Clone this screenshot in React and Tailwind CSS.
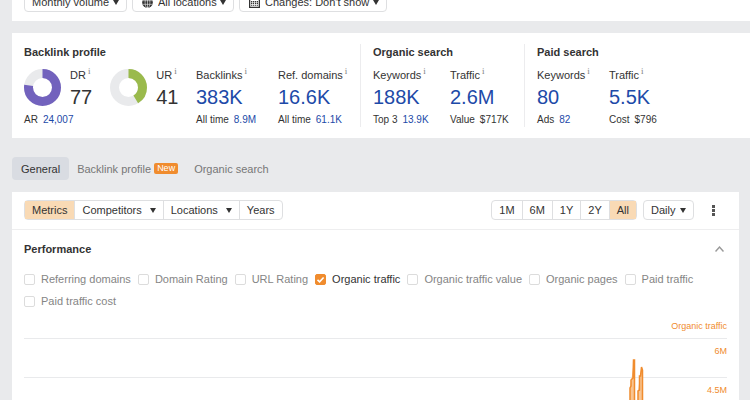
import { useState } from 'react';
import clsx from 'clsx';

const SERIES = [
  'Referring domains',
  'Domain Rating',
  'URL Rating',
  'Organic traffic',
  'Organic traffic value',
  'Organic pages',
  'Paid traffic',
  'Paid traffic cost',
];

const RANGES = ['1M', '6M', '1Y', '2Y', 'All'];

function Caret({ className }) {
  return (
    <svg viewBox="0 0 6 5" className={clsx('h-[5px] w-[6px] shrink-0 fill-[#333]', className)} aria-hidden="true">
      <path d="M0 0h6L3 5z" />
    </svg>
  );
}

function Globe() {
  return (
    <svg viewBox="0 0 12 12" className="h-[11px] w-[11px]" aria-hidden="true">
      <circle cx="6" cy="6" r="5.8" fill="#333" />
      <g fill="none" stroke="#fff" strokeWidth="0.6">
        <ellipse cx="6" cy="6" rx="2.6" ry="5.6" />
        <path d="M6 0v12M0.5 4h11M0.5 8h11" />
      </g>
    </svg>
  );
}

function Calendar() {
  return (
    <svg viewBox="0 0 12 12" className="h-[11px] w-[11px]" aria-hidden="true">
      <path d="M0.7 0.7h10.6v10.6H0.7z" fill="#fff" stroke="#333" strokeWidth="1.4" />
      <path d="M0 0h12v3.2H0z" fill="#333" />
      <path d="M2.2 5h7.6M2.2 7h7.6M2.2 9h7.6" stroke="#333" strokeWidth="1.3" strokeDasharray="1.4 0.7" />
    </svg>
  );
}

function Select({ label, icon, options, small }) {
  return (
    <div className="relative flex h-5 items-center rounded-sm border border-[#dedfe1] bg-white">
      {icon && <span className="pointer-events-none absolute left-[9px]">{icon}</span>}
      <select
        aria-label={label}
        className={clsx(
          'h-full appearance-none bg-transparent outline-none',
          icon ? 'pl-[25px]' : 'pl-[7px]',
          small ? 'pr-[17px]' : 'pr-4'
        )}
      >
        {options.map((o) => (
          <option key={o}>{o}</option>
        ))}
      </select>
      <Caret className="pointer-events-none absolute right-[7px]" />
    </div>
  );
}

// share is the filled part, clockwise from the top
function Donut({ share, color }) {
  const length = 2 * Math.PI * 14;
  return (
    <svg viewBox="0 0 37 37" className="h-[37px] w-[37px] shrink-0" aria-hidden="true">
      <g fill="none" strokeWidth="9" transform="rotate(-90 18.5 18.5)">
        <circle cx="18.5" cy="18.5" r="14" stroke="#e9eaec" />
        <circle
          cx="18.5"
          cy="18.5"
          r="14"
          stroke={color}
          strokeDasharray={`${(length * share) / 100} ${length}`}
        />
      </g>
    </svg>
  );
}

function Label({ children }) {
  return (
    <div className="flex h-4 whitespace-nowrap leading-4">
      {children}
      <span className="ml-[2px] font-serif text-[9px] leading-[9px] text-[#888]">i</span>
    </div>
  );
}

function Rating({ name, value, color }) {
  return (
    <div className="flex gap-[9px]">
      <div className="pt-[2px]">
        <Donut share={value} color={color} />
      </div>
      <div>
        <Label>{name}</Label>
        <div className="mt-[2px] text-[20px] leading-6">{value}</div>
      </div>
    </div>
  );
}

function Metric({ label, value, note, noteValue, link = true, className }) {
  return (
    <div className={className}>
      <Label>{label}</Label>
      <a href="#" className="mt-[2px] block text-[20px] leading-6 text-[#1d4aa8]">{value}</a>
      <div className="mt-1 flex gap-[5px] whitespace-nowrap text-[10px] leading-[14px]">
        <span>{note}</span>
        {link ? <a href="#" className="text-[#1d4aa8]">{noteValue}</a> : <span>{noteValue}</span>}
      </div>
    </div>
  );
}

function Section({ title, className, children }) {
  return (
    <section className={className}>
      <h2 className="text-[11px] font-bold leading-4">{title}</h2>
      <div className="mt-[7px] flex">{children}</div>
    </section>
  );
}

function SeriesCheckbox({ name, checked, onChange }) {
  return (
    <label className={clsx('flex h-4 items-center gap-[6px]', checked ? 'text-[#333]' : 'text-[#858585]')}>
      <span className="relative flex">
        <input
          type="checkbox"
          checked={checked}
          onChange={onChange}
          className="h-[11px] w-[11px] appearance-none rounded-xs border border-[#dcdcdc] bg-white checked:border-[#f08c2e] checked:bg-[#f08c2e]"
        />
        {checked && (
          <svg viewBox="0 0 11 11" className="pointer-events-none absolute inset-0 h-[11px] w-[11px]">
            <path d="M2.5 5.8l2.1 2L8.6 3.5" fill="none" stroke="#fff" strokeWidth="1.6" />
          </svg>
        )}
      </span>
      {name}
    </label>
  );
}

export default function App() {
  const [selected, setSelected] = useState(['Organic traffic']);
  const [range, setRange] = useState('All');

  const toggle = (name) =>
    setSelected((prev) => (prev.includes(name) ? prev.filter((n) => n !== name) : [...prev, name]));

  return (
    <div className="flex h-screen flex-col overflow-hidden bg-[#e9eaec] pl-3 font-['Liberation_Sans',Arial,sans-serif] text-[11px] leading-4 text-[#333]">
      {/* Filters */}
      <div className="-mt-2 flex shrink-0 gap-[5px] bg-white px-3 pb-[9px]">
        <Select label="Volume" options={['Monthly volume', 'Average']} />
        <Select label="Location" icon={<Globe />} options={['All locations', 'Local']} />
        <Select label="Changes" icon={<Calendar />} options={["Changes: Don't show", 'Changes: Show']} />
      </div>

      {/* Overview */}
      <div className="mt-3 flex shrink-0 bg-white px-3 py-[11px]">
        <Section title="Backlink profile" className="pr-3">
          <div className="w-[172px]">
            <div className="flex gap-[18px]">
              <Rating name="DR" value={77} color="#7262bd" />
              <Rating name="UR" value={41} color="#9aba4c" />
            </div>
            <div className="mt-1 flex gap-[5px] text-[10px] leading-[14px]">
              <span>AR</span>
              <a href="#" className="text-[#1d4aa8]">24,007</a>
            </div>
          </div>
          <Metric label="Backlinks" value="383K" note="All time" noteValue="8.9M" className="w-[82px]" />
          <Metric label="Ref. domains" value="16.6K" note="All time" noteValue="61.1K" className="w-[70px]" />
        </Section>
        <Section title="Organic search" className="border-l border-[#ececee] px-3">
          <Metric label="Keywords" value="188K" note="Top 3" noteValue="13.9K" className="w-[77px]" />
          <Metric label="Traffic" value="2.6M" note="Value" noteValue="$717K" link={false} className="w-[62px]" />
        </Section>
        <Section title="Paid search" className="border-l border-[#ececee] px-3">
          <Metric label="Keywords" value="80" note="Ads" noteValue="82" className="w-[72px]" />
          <Metric label="Traffic" value="5.5K" note="Cost" noteValue="$796" link={false} />
        </Section>
      </div>

      {/* Tabs */}
      <nav className="mt-[19px] flex h-[23px] shrink-0 items-center text-[#777]">
        <button className="h-full rounded-sm bg-[#d9dce2] px-[9px] text-[#333]">General</button>
        <button className="ml-2 flex items-center gap-[3px]">
          Backlink profile
          <span className="rounded-xs bg-[#f08c2e] px-[3px] text-[9px] leading-[11px] text-white">New</span>
        </button>
        <button className="ml-4">Organic search</button>
      </nav>

      {/* Chart panel */}
      <main className="mr-[11px] mt-3 grow bg-white">
        <div className="flex items-center justify-between border-b border-[#eeeeef] px-3 pb-[9px] pt-2">
          <div className="flex h-5 divide-x divide-[#dedfe1] rounded-sm border border-[#dedfe1]">
            <button className="bg-[#f9dab5] px-[7px]">Metrics</button>
            <button className="flex items-center gap-2 px-[7px]">Competitors <Caret /></button>
            <button className="flex items-center gap-2 px-[7px]">Locations <Caret /></button>
            <button className="px-[7px]">Years</button>
          </div>
          <div className="flex items-center gap-[6px]">
            <div className="flex h-5 divide-x divide-[#dedfe1] rounded-sm border border-[#dedfe1]">
              {RANGES.map((r) => (
                <button key={r} onClick={() => setRange(r)} className={clsx('px-[7px]', r === range && 'bg-[#f9dab5]')}>
                  {r}
                </button>
              ))}
            </div>
            <Select label="Interval" small options={['Daily']} />
            <button aria-label="More" className="ml-3 mr-3">
              <svg viewBox="0 0 3 11" className="h-[11px] w-[3px] fill-[#555]">
                <path d="M0 0h3v3H0zM0 4h3v3H0zM0 8h3v3H0z" />
              </svg>
            </button>
          </div>
        </div>

        <div className="px-3 pt-[11px]">
          <div className="flex items-center justify-between">
            <h2 className="font-bold">Performance</h2>
            <button aria-label="Collapse" className="pr-[3px]">
              <svg viewBox="0 0 9 6" className="h-[6px] w-[9px]" fill="none" stroke="#999" strokeWidth="1.5">
                <path d="M0.5 5.5l4-4.4 4 4.4" />
              </svg>
            </button>
          </div>

          <div className="mt-[14px] flex flex-wrap gap-x-[7px] gap-y-[6px]">
            {SERIES.map((name) => (
              <SeriesCheckbox
                key={name}
                name={name}
                checked={selected.includes(name)}
                onChange={() => toggle(name)}
              />
            ))}
          </div>

          <div className="mt-[9px] text-right text-[9px] text-[#f08c2e]">
            <div className="pb-1">Organic traffic</div>
            <div className="relative">
              <div className="h-[39px] border-t border-[#e9eaec] pt-1">6M</div>
              <div className="h-[39px] border-t border-[#e9eaec] pt-1">4.5M</div>
              <svg viewBox="0 0 703 78" preserveAspectRatio="none" className="absolute inset-0 h-full w-full">
                <path
                  d="M606 78V50L607.500 41L610 22L611 78M614 78V53L616 38L617.500 29L619 32V78z"
                  fill="#f9c592"
                />
                <path
                  d="M606 78V50L607 48V42L609 40L609.500 22H610.500V78M614 78V53L615.500 52V38H616.500L617.500 29L618.500 32V78"
                  fill="none"
                  stroke="#f08c2e"
                  strokeWidth="1.5"
                />
              </svg>
            </div>
          </div>
        </div>
      </main>
    </div>
  );
}
